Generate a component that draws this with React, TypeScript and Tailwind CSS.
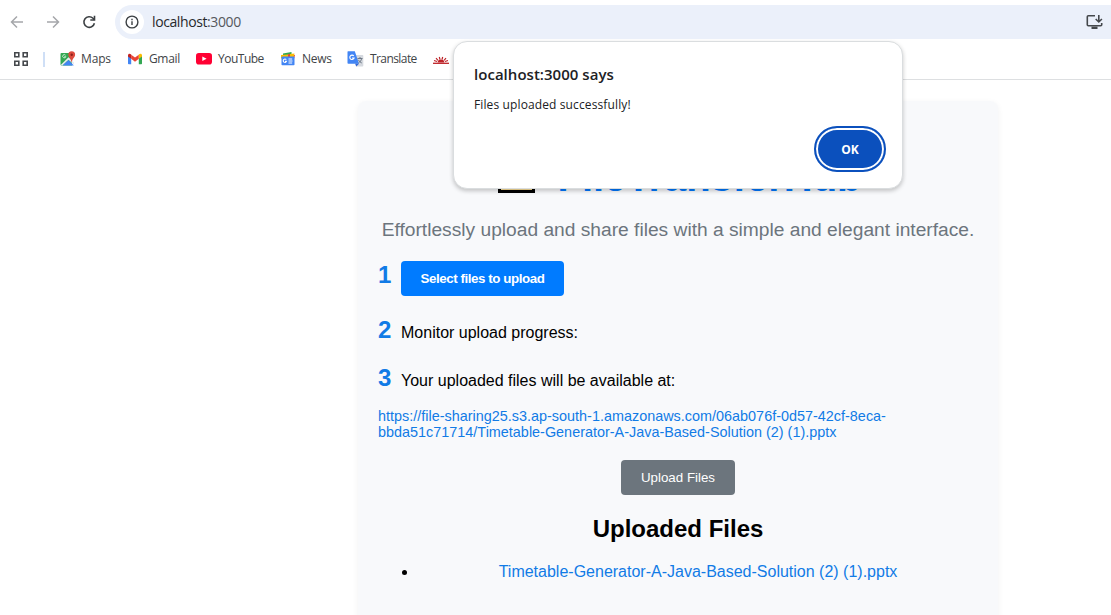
import React from "react";

const uiFont = "font-['Open_Sans',sans-serif]";

function MapsIcon() {
  return (
    <svg width="16" height="16" viewBox="0 0 16 16">
      <path d="M1.500 2H12v12.500H1.500Q.5 14.500.5 13.500V3Q.5 2 1.500 2z" fill="#34a853" />
      <path d="M.7 14L8.500 6.300 14 11.500v2.200l-5.500-5-6 5.800z" fill="#e8eaed" />
      <path d="M2.500 14.500l6-5.600 5.300 5.600z" fill="#4285f4" />
      <path d="M5.500 4.200a1.600 1.600 0 1 0 .3 1.500H4.300" fill="none" stroke="#d7f0dd" strokeWidth=".9" />
      <path d="M11.700.3a3.400 3.400 0 0 1 3.400 3.500c0 2.700-2.800 3.700-3.200 7.200h-.4C11.100 7.500 8.300 6.500 8.300 3.800A3.400 3.400 0 0 1 11.700.3z" fill="#dd4b3e" />
      <circle cx="11.700" cy="3.700" r="1.200" fill="#8c201b" />
    </svg>
  );
}

function GmailIcon() {
  return (
    <svg width="16" height="16" viewBox="0 0 16 16">
      <path d="M1 4v8.500q0 .8.8.8h2.400V6.500z" fill="#4285f4" />
      <path d="M15 4v8.500q0 .8-.8.8h-2.400V6.500z" fill="#34a853" />
      <path d="M4.200 3.700L8 6.600l3.800-2.900v4.100L8 10.700 4.200 7.800z" fill="#ea4335" />
      <path d="M1 4.300C1 2.700 2.700 2.200 3.800 3.200l.4.400v4.200L1 5.400z" fill="#c5221f" />
      <path d="M15 4.300c0-1.600-1.700-2.100-2.800-1.100l-.4.400v4.200L15 5.400z" fill="#fbbc04" />
    </svg>
  );
}

function YouTubeIcon() {
  return (
    <svg width="16" height="12" viewBox="0 0 16 12">
      <rect width="16" height="11.500" rx="2.800" fill="#ff0033" />
      <path d="M6.300 3.400v4.700l4.300-2.350z" fill="#fff" />
    </svg>
  );
}

function NewsIcon() {
  return (
    <svg width="16" height="16" viewBox="0 0 16 16">
      <path d="M3 2.500L11.500 1v5H3z" fill="#34a853" />
      <path d="M1 4l8-.6v4H1z" fill="#fbbc04" />
      <path d="M8 3l7 1-1 4H8z" fill="#ea4335" />
      <path d="M10 3l4.500-.5-1 4H10z" fill="#fbbc04" />
      <rect x="1.500" y="5.500" width="13" height="8.700" rx=".8" fill="#4285f4" />
      <path d="M6.300 8.700a1.700 1.700 0 1 0 .2 1.700H5" fill="none" stroke="#fff" strokeWidth="1.100" />
      <path d="M8.500 8h3.700M8.500 10h4M8.500 12h3.700" stroke="#fff" strokeWidth="1" />
    </svg>
  );
}

function TranslateIcon() {
  return (
    <svg width="17" height="16" viewBox="0 0 17 16">
      <path d="M6 4h9.500q.8 0 .8.800v9.900q0 .8-.8.800H9z" fill="#d5d9df" />
      <path d="M1 .3h6.800L12 12.800H1.300q-.8 0-.8-.8V1q0-.7.500-.7z" fill="#4285f4" />
      <path d="M8.200 12.800H12l-2.700 2.800z" fill="#3367d6" />
      <path d="M6.800 5a2.200 2.200 0 1 0 .3 2H5" fill="none" stroke="#fff" strokeWidth="1.100" />
      <path d="M10.500 7.500h5M13 6v1.500M14.700 7.500c-.4 2-1.700 3.500-3.200 4.500M11.300 8.800c.7 1.500 2 2.500 3.500 3.200" fill="none" stroke="#66727f" strokeWidth=".9" />
    </svg>
  );
}

function SunIcon() {
  return (
    <svg width="16" height="16" viewBox="0 0 16 16" fill="none" stroke="#bd2328">
      <path d="M0 12.300h16" strokeWidth="1.300" />
      <path d="M4.700 11.500a3.300 3 0 0 1 6.600 0z" fill="#bd2328" stroke="none" />
      <path d="M4 10.500L1 9.500M5 9.300L3 7.200M7 8.500L6.300 6M9 8.500l.7-2.500M11 9.300l2-2.100M12 10.500l3-1" strokeWidth="1.200" />
    </svg>
  );
}

function Toolbar() {
  return (
    <div className="flex h-[34px] items-center">
      <div className="flex w-[115px] items-center gap-[20px] pl-[9px]">
        <svg width="16" height="16" viewBox="0 0 16 16" fill="none" stroke="#a5a7aa" strokeWidth="1.500">
          <path d="M14 8H3M8 2.500L2.500 8 8 13.500" />
        </svg>
        <svg width="16" height="16" viewBox="0 0 16 16" fill="none" stroke="#a5a7aa" strokeWidth="1.500">
          <path d="M2 8h11M8 2.500L13.500 8 8 13.500" />
        </svg>
        <svg width="16" height="16" viewBox="0 0 16 16" fill="none" stroke="#3c4043" strokeWidth="1.600">
          <path d="M13.400 9.200A5.300 5.300 0 1 1 12 4.300L13.500 5.900" />
          <path d="M13.500 1.800V6H9.300" />
        </svg>
      </div>
      <div className="flex h-[34px] grow items-center rounded-l-full bg-[#ebf0fa] pl-[5px] pr-[8px]">
        <div className="flex size-6 items-center justify-center rounded-full bg-white">
          <svg width="14" height="14" viewBox="0 0 14 14" fill="none" stroke="#3c4043" strokeWidth="1.400">
            <circle cx="7" cy="7" r="5.900" />
            <path d="M7 6.200V10M7 3.800v1.400" />
          </svg>
        </div>
        <span className="ml-2 grow text-[14px] leading-5 tracking-[-0.4px] text-[#27292c]">
          localhost<span className="text-[#55585d]">:3000</span>
        </span>
        <svg width="17" height="16" viewBox="0 0 17 16" fill="none" stroke="#45484c" strokeWidth="1.600">
          <path d="M9 1.800H2.300Q1.300 1.800 1.300 2.800v8q0 1 1 1h12.400q1 0 1-1V9" />
          <path d="M5.500 13.800h6" strokeWidth="2.400" />
          <path d="M12.800 1v6.800M9.700 5l3.100 3 3.100-3" />
        </svg>
      </div>
    </div>
  );
}

function Bookmark({ icon, label, className }: { icon: React.ReactNode; label: string; className: string }) {
  return (
    <div className={`flex shrink-0 items-center whitespace-nowrap ${className}`}>
      {icon}
      <span>{label}</span>
    </div>
  );
}

function BookmarkBar() {
  return (
    <div className="flex h-[40px] items-center pl-[13px] text-[12px] leading-4 text-[#414447]">
      <svg width="16" height="16" viewBox="0 0 16 16" fill="none" stroke="#45484c" strokeWidth="1.600">
        <path d="M1.800 1.800h4v4h-4zM10.200 1.800h4v4h-4zM1.800 10.200h4v4h-4zM10.200 10.200h4v4h-4z" />
      </svg>
      <div className="ml-[14px] h-[15px] w-[2px] bg-[#cfdff6]" />
      <Bookmark className="ml-[15px] w-[67px] gap-[5px] tracking-[-0.15px]" icon={<MapsIcon />} label="Maps" />
      <Bookmark className="w-[69px] gap-[6px] tracking-[-0.35px]" icon={<GmailIcon />} label="Gmail" />
      <Bookmark className="w-[84px] gap-[6px] tracking-[-0.5px]" icon={<YouTubeIcon />} label="YouTube" />
      <Bookmark className="w-[67px] gap-[6px] tracking-[-0.25px]" icon={<NewsIcon />} label="News" />
      <Bookmark className="w-[86px] gap-[6px] tracking-[-0.58px]" icon={<TranslateIcon />} label="Translate" />
      <SunIcon />
    </div>
  );
}

function Step({ n, children, className }: { n: number; children: React.ReactNode; className: string }) {
  return (
    <div className={`flex items-baseline ${className}`}>
      <span className="w-[23px] text-[24px] font-bold leading-7 text-[#117be6]">{n}</span>
      {children}
    </div>
  );
}

function UploadCard() {
  return (
    <main className="ml-[358px] mt-[21px] flex h-[560px] w-[640px] shrink-0 flex-col rounded-lg bg-[#f8f9fb] px-5 pt-[53px] font-['Liberation_Sans',Arial,sans-serif] text-black shadow-[0_2px_6px_rgba(0,0,0,0.06)]">
      <h1 className="flex h-[46px] items-start justify-center gap-[23px] whitespace-nowrap pl-[3px] text-[40px] font-bold leading-[46px] tracking-[-0.04px] text-[#0078ff]">
        <svg className="mt-[3px]" width="37" height="36" viewBox="0 0 37 36">
          <path d="M1.500 1.500h13l4 5h17v28h-34z" fill="#ffe39a" stroke="#000" strokeWidth="3" />
        </svg>
        FileTransferHub
      </h1>
      <p className="mt-[19px] whitespace-nowrap text-center text-[19.200px] leading-[22px] text-[#6c757d]">
        Effortlessly upload and share files with a simple and elegant interface.
      </p>
      <Step n={1} className="mt-[20px] h-[35px]">
        <button className="h-[35px] w-[163px] rounded-[4px] bg-[#007bff] pt-px text-[13.333px] font-bold tracking-[-0.43px] text-white">
          Select files to upload
        </button>
      </Step>
      <Step n={2} className="mt-[20px] h-[28px]">
        <span>Monitor upload progress:</span>
      </Step>
      <Step n={3} className="mt-[20px] h-[28px]">
        <span>Your uploaded files will be available at:</span>
      </Step>
      <a className="mt-[16px] text-[14.400px] leading-4 tracking-[0.01px] text-[#117be6]">
        https://file-sharing25.s3.ap-south-1.amazonaws.com/06ab076f-0d57-42cf-8eca-
        <br />
        bbda51c71714/Timetable-Generator-A-Java-Based-Solution (2) (1).pptx
      </a>
      <button className="mt-[20px] h-[35px] w-[114px] shrink-0 self-center rounded-[4px] bg-[#6c757d] text-[13.333px] text-white">
        Upload Files
      </button>
      <h2 className="mt-[20px] text-center text-[24px] font-bold leading-7">Uploaded Files</h2>
      <ul className="mt-[20px] list-disc pl-10 text-center">
        <li className="leading-[18px]">
          <a className="text-[#117be6]">Timetable-Generator-A-Java-Based-Solution (2) (1).pptx</a>
        </li>
      </ul>
    </main>
  );
}

function AlertDialog() {
  return (
    <div className={`absolute left-[453px] top-[41px] flex h-[148px] w-[450px] flex-col rounded-[14px] border border-[#dadddf] bg-white pl-[20px] pr-[18px] pt-[22px] text-[#202124] shadow-[0_2px_4px_rgba(0,0,0,0.22)] ${uiFont}`}>
      <h3 className="text-[15px] font-semibold leading-5 tracking-[0.03px]">localhost:3000 says</h3>
      <p className="mt-[11px] text-[12px] leading-5 tracking-[0.12px]">Files uploaded successfully!</p>
      <button className="mt-[13px] h-[42px] w-[68px] self-end rounded-full bg-[#0b50bd] pt-px text-[12px] font-bold text-white outline-2 outline-[#0b50bd] ring-2 ring-inset ring-white">
        OK
      </button>
    </div>
  );
}

export default function App() {
  return (
    <div className="relative flex h-[615px] w-[1111px] flex-col overflow-hidden bg-white">
      <header className={`h-[80px] shrink-0 border-b border-[#dddfe1] pt-[5px] ${uiFont}`}>
        <Toolbar />
        <BookmarkBar />
      </header>
      <UploadCard />
      <AlertDialog />
    </div>
  );
}
